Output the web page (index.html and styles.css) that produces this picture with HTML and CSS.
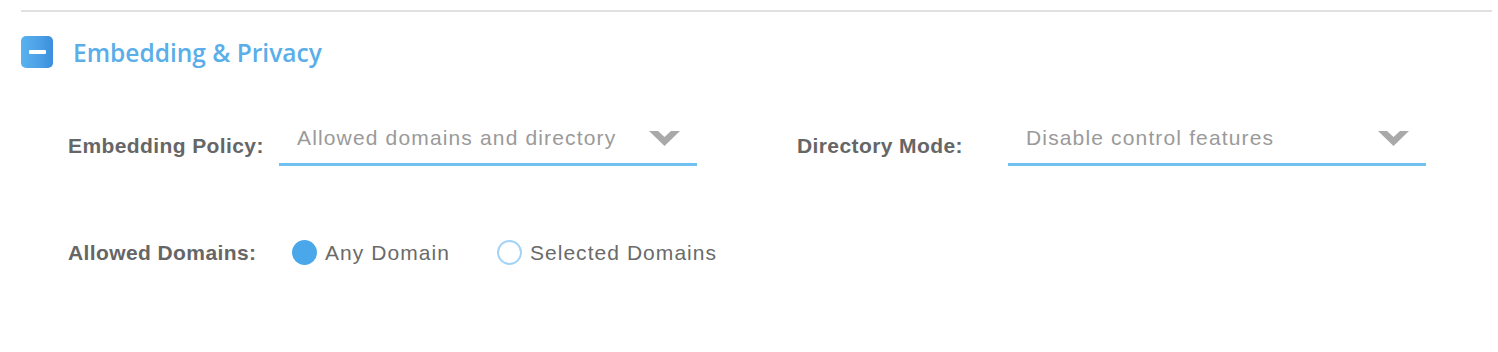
FILE: index.html
```html
<!DOCTYPE html>
<html>
<head>
<meta charset="utf-8">
<link rel="stylesheet" href="styles.css">
</head>
<body>
<div class="panel">
  <div class="separator"></div>
  <div class="section-head">
    <span class="toggle"><span class="toggle-bar"></span></span>
    <h2 class="section-title">Embedding &amp; Privacy</h2>
  </div>
  <div class="form">
    <div class="field-row">
      <div class="field">
        <span class="label">Embedding Policy:</span>
        <div class="select">
          <span class="select-text">Allowed domains and directory</span>
          <svg class="chevron" width="31" height="16" viewBox="0 0 31 16"><polygon points="0,1 9,1 15.5,7 22,1 31,1 15.5,16" fill="#a9a9a9"/></svg>
        </div>
      </div>
      <div class="field">
        <span class="label">Directory Mode:</span>
        <div class="select">
          <span class="select-text">Disable control features</span>
          <svg class="chevron" width="31" height="16" viewBox="0 0 31 16"><polygon points="0,1 9,1 15.5,7 22,1 31,1 15.5,16" fill="#a9a9a9"/></svg>
        </div>
      </div>
    </div>
    <div class="radio-row">
      <span class="label">Allowed Domains:</span>
      <label class="radio"><span class="radio-dot checked"></span><span class="radio-text">Any Domain</span></label>
      <label class="radio"><span class="radio-dot"></span><span class="radio-text">Selected Domains</span></label>
    </div>
  </div>
</div>
</body>
</html>
```

FILE: styles.css
```css
html, body {
  margin: 0;
  padding: 0;
  background: #ffffff;
}

.panel {
  padding: 10px 0 0 21px;
  font-family: "Liberation Sans", Arial, sans-serif;
}

.separator {
  width: 1471px;
  height: 2px;
  background: #e0e0e0;
}

.section-head {
  display: flex;
  align-items: center;
  gap: 20px;
  margin-top: 24px;
  height: 32px;
}

.toggle {
  width: 32px;
  height: 32px;
  border-radius: 5px;
  background: linear-gradient(90deg, #5ab2ee 0%, #4a9fe6 60%, #3b8edc 100%);
  display: flex;
  align-items: center;
  justify-content: center;
}

.toggle-bar {
  width: 17px;
  height: 4px;
  background: #ffffff;
  border-radius: 1px;
}

.section-title {
  margin: 0;
  font-family: "Open Sans", "Liberation Sans", sans-serif;
  font-size: 24.5px;
  font-weight: 600;
  color: #5aaee9;
}

.form {
  padding-left: 47px;
}

.field-row {
  display: flex;
  gap: 100px;
  margin-top: 54px;
}

.field {
  display: flex;
  align-items: center;
}

.label {
  width: 211px;
  flex: none;
  font-size: 21px;
  font-weight: 700;
  letter-spacing: 0.4px;
  color: #666666;
  padding-top: 4px;
}

.select {
  width: 418px;
  height: 44px;
  box-sizing: border-box;
  border-bottom: 3px solid #70c0f2;
  display: flex;
  align-items: center;
  justify-content: space-between;
  padding: 0 17px 9px 18px;
}

.select-text {
  font-size: 21px;
  letter-spacing: 1.15px;
  color: #9a9a9a;
}

.chevron {
  display: block;
}

.radio-row {
  display: flex;
  align-items: center;
  margin-top: 74px;
}

.radio-row .label {
  padding-top: 0;
  width: 224px;
}

.radio {
  display: flex;
  align-items: center;
  gap: 8px;
  margin-right: 47px;
}

.radio-dot {
  width: 25px;
  height: 25px;
  box-sizing: border-box;
  border-radius: 50%;
  border: 2px solid #a3d3f6;
  background: #ffffff;
}

.radio-dot.checked {
  background: #4aa8ea;
  border-color: #4aa8ea;
}

.radio-text {
  font-size: 21px;
  letter-spacing: 1.05px;
  color: #6a6a6a;
}
```
